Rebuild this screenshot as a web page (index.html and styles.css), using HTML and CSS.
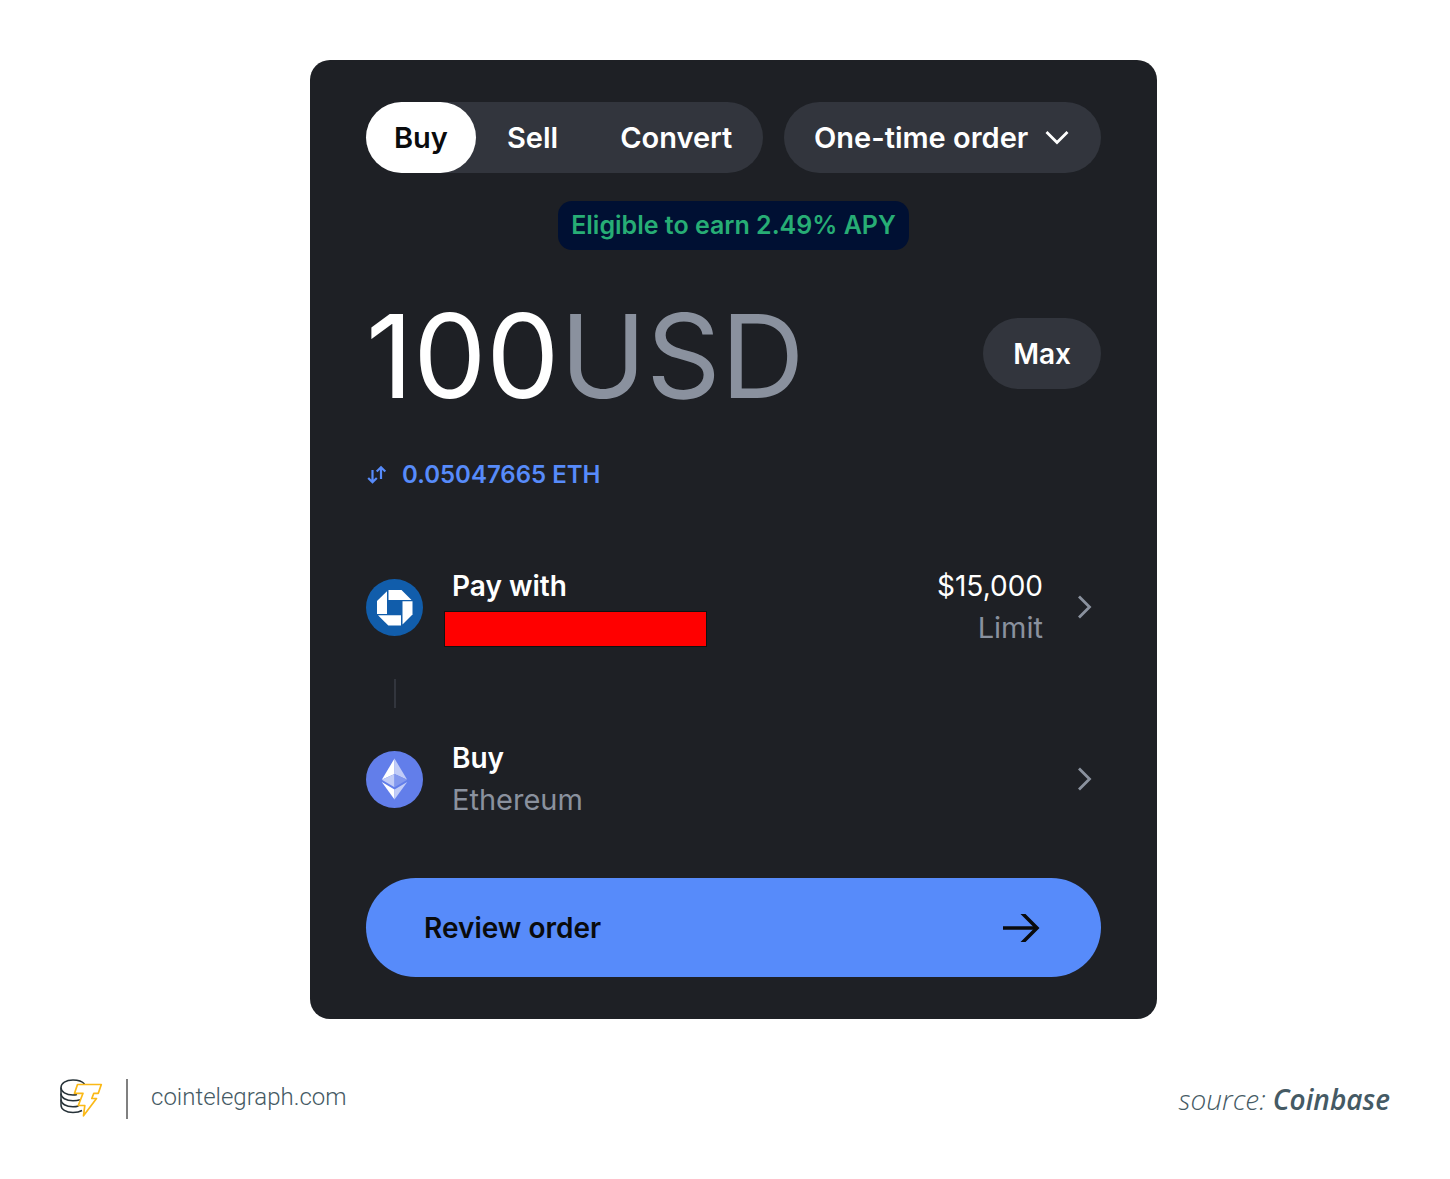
FILE: index.html
```html
<!DOCTYPE html>
<html lang="en">
<head>
  <meta charset="UTF-8" />
  <meta name="viewport" content="width=device-width, initial-scale=1.0"/>
  <title>Buy Ethereum</title>
  <link rel="stylesheet" href="styles.css">
</head>

<body>
  <main>
    <form class="card">
      <div class="top">
        <div class="tabs">
          <button type="button" class="tab active">Buy</button>
          <button type="button" class="tab">Sell</button>
          <button type="button" class="tab">Convert</button>
        </div>
        <div class="order">
          <select class="order-select" aria-label="Order type">
            <option>One-time order</option>
          </select>
          <svg class="down" width="24" height="16" viewBox="0 0 24 16" aria-hidden="true">
            <path d="M1.500 2 L12 12.500 L22.500 2" fill="none" stroke="#fff" stroke-width="2.800"/>
          </svg>
        </div>
      </div>

      <p class="badge">Eligible to earn 2.49% APY</p>

      <div class="amount">
        <input class="amount-input" id="amount" type="text" inputmode="decimal" value="100">
        <label class="currency" for="amount">USD</label>
        <button type="button" class="max">Max</button>
      </div>

      <button type="button" class="swap">
        <svg width="20" height="20" viewBox="0 0 20 20" fill="none" stroke="#578bfa" stroke-width="2.200" aria-hidden="true">
          <path d="M5.500 5 V17.500 M1.200 13 L5.500 17.300 L9.800 13"/>
          <path d="M14 14 V2 M9.700 6.500 L14 2.200 L18.300 6.500"/>
        </svg>
        0.05047665 ETH
      </button>

      <button type="button" class="row">
        <svg class="coin" viewBox="0 0 57 57" aria-hidden="true">
          <circle cx="28.500" cy="28.500" r="28.500" fill="#115dab"/>
          <g fill="#fff">
            <path d="M22.500 11 H35.500 L45.500 21 H22.500 Z"/>
            <path d="M36.500 22.300 H46.500 V35.500 L36.500 45.500 Z"/>
            <path d="M12 36.300 H35 V46.500 H22.300 Z"/>
            <path d="M21 12.300 V35 H11 V22 Z"/>
          </g>
        </svg>
        <span class="text">
          <span class="name">Pay with</span>
          <span class="redacted"></span>
        </span>
        <span class="limit">
          <span class="value">$15,000</span>
          <span class="muted">Limit</span>
        </span>
        <svg class="next" width="16" height="24" viewBox="0 0 16 24" aria-hidden="true">
          <path d="M2 1.500 L12.500 12 L2 22.500" fill="none" stroke="#8a919e" stroke-width="2.800"/>
        </svg>
      </button>

      <div class="connector"></div>

      <button type="button" class="row">
        <svg class="coin" viewBox="0 0 57 57" aria-hidden="true">
          <circle cx="28.500" cy="28.500" r="28.500" fill="#627eea"/>
          <path d="M28.500 7.500 L15.800 28.700 L28.500 23 Z" fill="#fff"/>
          <path d="M28.500 7.500 L41.200 28.700 L28.500 23 Z" fill="#c1ccf7"/>
          <path d="M28.500 23 L15.800 28.700 L28.500 36.200 Z" fill="#c1ccf7"/>
          <path d="M28.500 23 L41.200 28.700 L28.500 36.200 Z" fill="#8298ee"/>
          <path d="M15.800 31 L28.500 38.500 V48.500 Z" fill="#fff"/>
          <path d="M41.200 31 L28.500 38.500 V48.500 Z" fill="#c1ccf7"/>
        </svg>
        <span class="text">
          <span class="name">Buy</span>
          <span class="muted">Ethereum</span>
        </span>
        <svg class="next" width="16" height="24" viewBox="0 0 16 24" aria-hidden="true">
          <path d="M2 1.500 L12.500 12 L2 22.500" fill="none" stroke="#8a919e" stroke-width="2.800"/>
        </svg>
      </button>

      <button type="submit" class="review">
        Review order
        <svg width="38" height="30" viewBox="0 0 38 30" aria-hidden="true">
          <path d="M1 15 H35" fill="none" stroke="#0a0b0d" stroke-width="3.400"/>
          <path d="M18.500 1 H23.500 L37.500 15 L23.500 29 H18.500 L32.500 15 Z" fill="#0a0b0d"/>
        </svg>
      </button>
    </form>
  </main>

  <footer>
    <svg class="logo" width="44" height="40" viewBox="0 0 44 40" fill="none" stroke-linejoin="round" aria-hidden="true">
      <g stroke="#263238" stroke-width="1.500">
        <path d="M24.500 5 C22 2 18 1 13 1 C6 1 1 4 1 8.500 C1 13 6 16 13 16 C14.500 16 15.500 15.900 17 15.500"/>
        <path d="M1 8.500 V26 C1 30.500 6 33.500 13 33.500 C16.500 33.500 19.500 33 22 31.500"/>
        <path d="M1 14.500 C1 18.800 6 21.800 13 21.800 C15.500 21.800 18 21.500 20 20.800"/>
        <path d="M1 20.500 C1 24.800 6 27.800 13 27.800 C15 27.800 17 27.500 18.500 27"/>
      </g>
      <path d="M17.500 5.500 H41.300 L38.300 14.300 H33.800 L31.800 19.500 H36.500 L23.500 36.800 L24.800 26.500 H18.300 L23 14.300 H14.500 Z" stroke="#fbb917" stroke-width="1.700"/>
    </svg>
    <a class="site" href="#">cointelegraph.com</a>
    <p class="source">source: <b>Coinbase</b></p>
  </footer>
</body>
</html>
```
FILE: styles.css
```css
* {
  box-sizing: border-box;
}

body {
  margin: 0;
  padding: 60px;
  background: #fff;
  font-family: Inter, sans-serif;
  color: #fff;
}

button, select, input {
  font: inherit;
  color: inherit;
  background: none;
  border: none;
  padding: 0;
  margin: 0;
}

button {
  cursor: pointer;
}

p {
  margin: 0;
}

main {
  display: flex;
  justify-content: center;
  padding-left: 17px;
}

.card {
  display: flex;
  flex-direction: column;
  width: 100%;
  max-width: 847px;
  padding: 42px 56px;
  background: #1e2025;
  border-radius: 20px;
  font-size: 28px;
  font-weight: 600;
}

/* tabs and order type */
.top {
  display: flex;
  justify-content: space-between;
  font-size: 29px;
}

.tabs {
  display: flex;
  height: 71px;
  background: #32353d;
  border-radius: 36px;
}

.tab {
  padding: 0 31px;
  border-radius: 36px;
}

.tab.active {
  padding: 0 28px;
  background: #fff;
  color: #0a0b0d;
}

.order {
  display: flex;
  align-items: center;
  gap: 16px;
  height: 71px;
  padding: 0 32px 0 30px;
  background: #32353d;
  border-radius: 36px;
}

.order-select {
  appearance: none;
}

.badge {
  align-self: center;
  margin: 28px 0 68px;
  padding: 0 13px;
  line-height: 49px;
  font-size: 25px;
  color: #27ad75;
  background: #001033;
  border-radius: 14px;
}

/* amount */
.amount {
  display: flex;
  align-items: center;
  height: 71px;
  font-size: 116px;
  font-weight: 400;
}

.amount-input {
  width: 194px;
}

.amount-input, .currency {
  padding-top: 4px;
}

.currency {
  color: #8a919e;
}

.max {
  height: 71px;
  margin-left: auto;
  padding: 0 30px;
  font-size: 28px;
  font-weight: 600;
  background: #32353d;
  border-radius: 36px;
}

.swap {
  display: flex;
  align-items: center;
  align-self: flex-start;
  gap: 15px;
  margin: 71px 0 75px;
  padding-left: 1px;
  line-height: 30px;
  font-size: 24px;
  color: #578bfa;
}

/* pay with / buy rows */
.row {
  display: flex;
  align-items: center;
  padding-right: 8px;
  line-height: 42px;
  text-align: left;
}

.coin {
  width: 57px;
  height: 57px;
  margin-right: 29px;
}

.text, .limit {
  display: flex;
  flex-direction: column;
}

.text {
  flex: 1;
}

.name {
  font-weight: 600;
}

.redacted {
  width: 263px;
  height: 36px;
  margin: 4px 0 2px -8px;
  background: #f00;
  border: 1px solid #111;
}

.limit {
  margin-right: 34px;
  text-align: right;
}

.value, .muted {
  font-weight: 400;
}

.muted {
  font-size: 29px;
  color: #8a919e;
}

.connector {
  width: 2px;
  height: 29px;
  margin: 30px 28px 29px;
  background: #32353d;
}

.review {
  display: flex;
  align-items: center;
  justify-content: space-between;
  height: 99px;
  margin-top: 57px;
  padding: 0 61px 0 58px;
  color: #0a0b0d;
  background: #578bfa;
  border-radius: 50px;
}

/* footer */
footer {
  display: flex;
  align-items: center;
  margin-top: 60px;
  color: #455a64;
}

.site {
  margin-left: 22px;
  padding: 0 0 4px 23px;
  border-left: 2px solid #808080;
  line-height: 36px;
  font-family: Roboto, sans-serif;
  font-size: 24px;
  font-weight: 300;
  color: inherit;
  text-decoration: none;
}

.source {
  margin-left: auto;
  font-family: "Open Sans", sans-serif;
  font-size: 28px;
  line-height: 38px;
  font-weight: 300;
  font-style: italic;
}

.source b {
  font-weight: 600;
}
```
